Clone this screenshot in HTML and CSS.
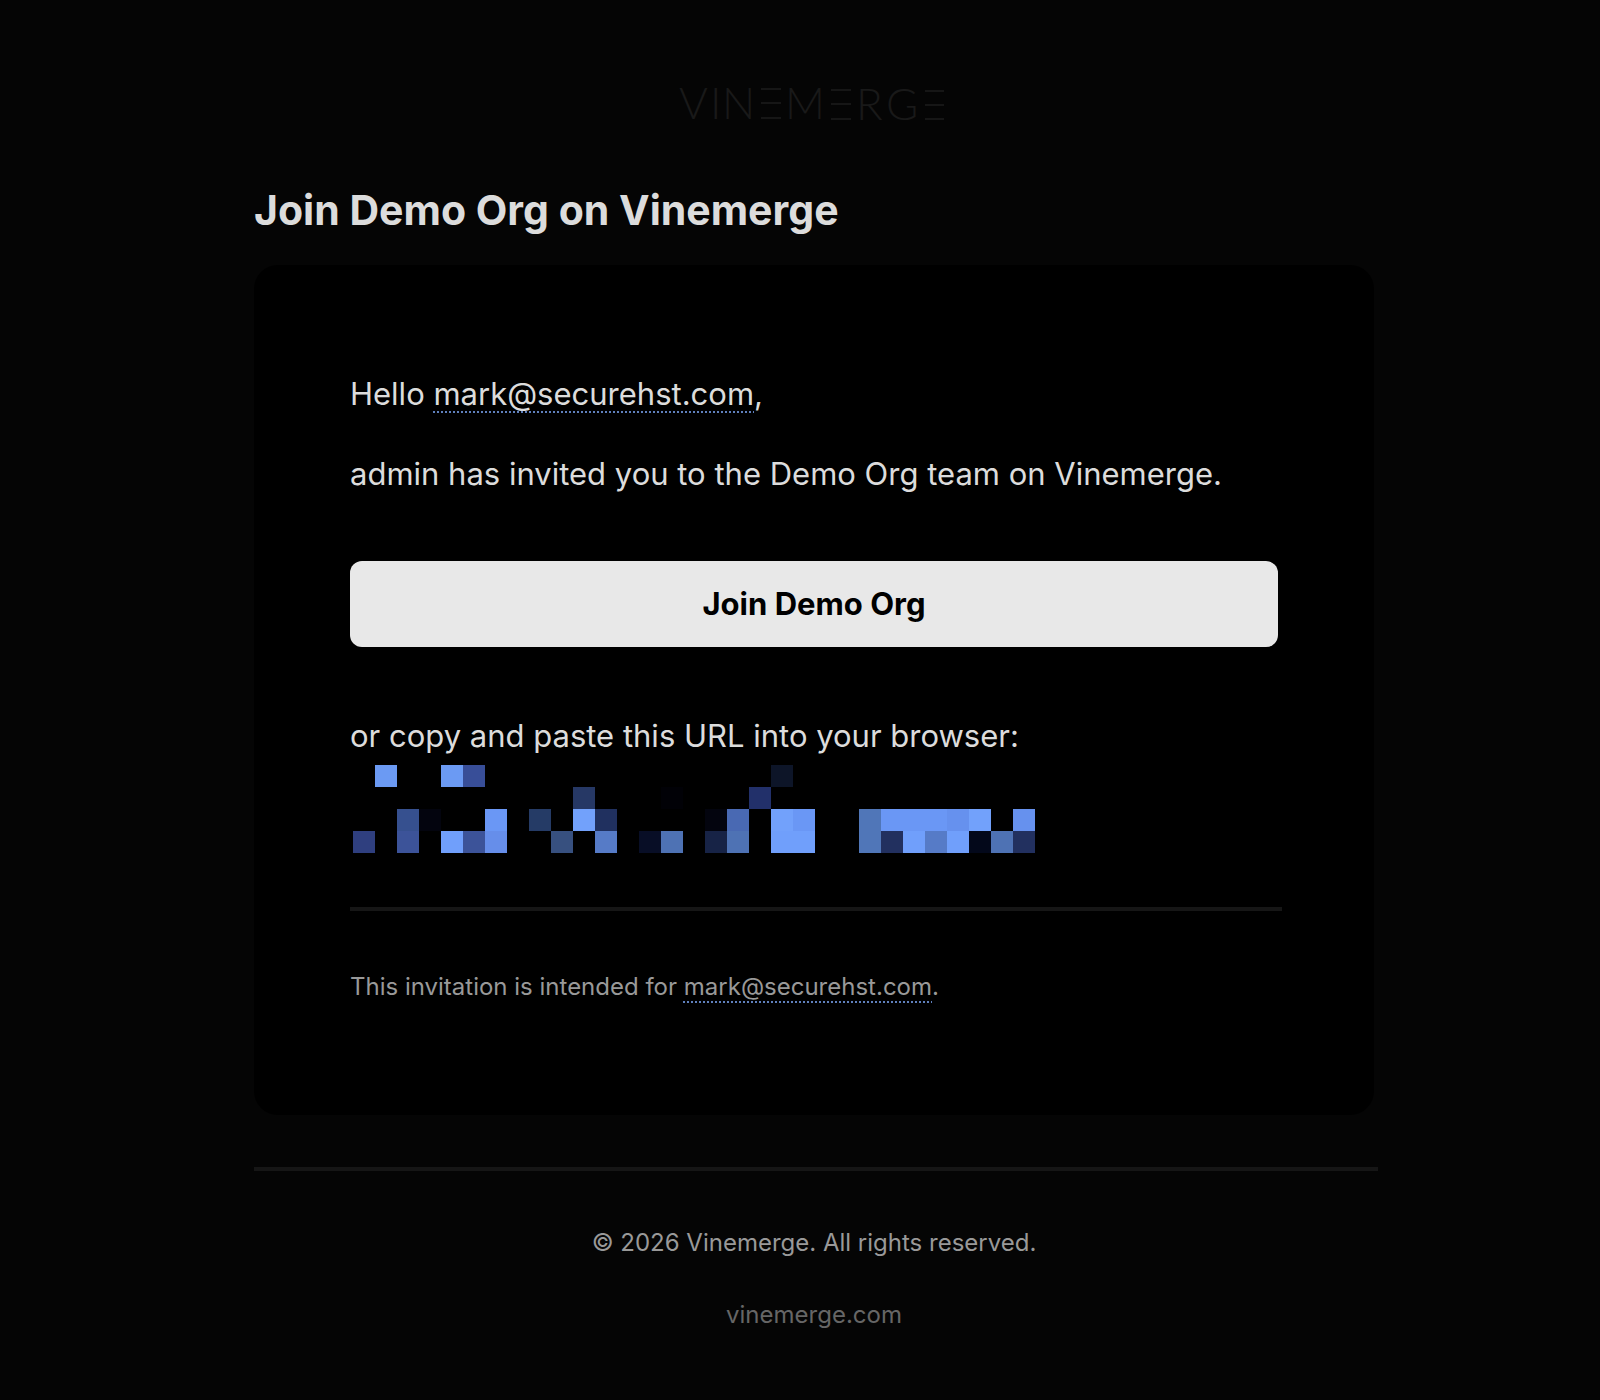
FILE: index.html
```html
<!DOCTYPE html>
<html lang="en">
<head>
  <meta charset="UTF-8" />
  <meta name="viewport" content="width=device-width, initial-scale=1.0" />
  <title>Join Demo Org on Vinemerge</title>
  <link rel="stylesheet" href="styles.css">
</head>
<body>

<div class="wrapper">
  <svg class="logo" width="290" height="74" viewBox="-10 -20 290 74" role="img" aria-label="Vinemerge">
    <g class="logo-text">
      <text x="0" y="33">V</text>
      <text x="31" y="33">I</text>
      <text x="43" y="33">N</text>
      <text x="106" y="33">M</text>
      <text x="177" y="34">R</text>
      <text x="207" y="34">G</text>
    </g>
    <path class="logo-bars" d="M82 3h20M82 17h20M82 32h20M152 4h20M152 18h20M152 33h20M246 5h19M246 19h19M246 33h19" />
  </svg>

  <h1>Join Demo Org on Vinemerge</h1>

  <main class="card">
    <p>Hello <a class="email" href="mailto:mark@securehst.com">mark@securehst.com</a>,</p>
    <p>admin has invited you to the Demo Org team on Vinemerge.</p>

    <button type="button" class="join-button">Join Demo Org</button>

    <p class="copy">or copy and paste this URL into your browser:</p>
    <!-- pixelated invite link, one unit per block -->
    <svg class="redacted" width="682" height="88" viewBox="0 0 31 4" shape-rendering="crispEdges" aria-hidden="true">
      <path fill="#6b9af3" d="M1 0h1v1h-1zM4 0h1v1h-1z" />
      <path fill="#384e98" d="M5 0h1v1h-1z" />
      <path fill="#0d1528" d="M19 0h1v1h-1z" />

      <path fill="#263865" d="M10 1h1v1h-1z" />
      <path fill="#010106" d="M14 1h1v1h-1z" />
      <path fill="#22306a" d="M18 1h1v1h-1z" />

      <path fill="#36508f" d="M2 2h1v1h-1z" />
      <path fill="#03040e" d="M3 2h1v1h-1zM16 2h1v1h-1z" />
      <path fill="#6a97f5" d="M6 2h1v1h-1zM20 2h1v1h-1zM24 2h3v1h-3z" />
      <path fill="#253b66" d="M8 2h1v1h-1z" />
      <path fill="#72a1fb" d="M10 2h1v1h-1zM19 2h1v1h-1zM28 2h1v1h-1z" />
      <path fill="#20305f" d="M11 2h1v1h-1z" />
      <path fill="#4969b3" d="M17 2h1v1h-1z" />
      <path fill="#5076b8" d="M23 2h1v2h-1z" />
      <path fill="#6691ee" d="M27 2h1v1h-1zM30 2h1v1h-1z" />

      <path fill="#2f3f7f" d="M0 3h1v1h-1z" />
      <path fill="#3c5399" d="M2 3h1v1h-1zM5 3h1v1h-1z" />
      <path fill="#709ffb" d="M4 3h1v1h-1zM19 3h2v1h-2zM25 3h1v1h-1zM27 3h1v1h-1z" />
      <path fill="#668eea" d="M6 3h1v1h-1z" />
      <path fill="#37507f" d="M9 3h1v1h-1z" />
      <path fill="#567bc7" d="M11 3h1v1h-1zM26 3h1v1h-1z" />
      <path fill="#080e26" d="M13 3h1v1h-1z" />
      <path fill="#4e72b4" d="M14 3h1v1h-1zM17 3h1v1h-1zM29 3h1v1h-1z" />
      <path fill="#172346" d="M16 3h1v1h-1z" />
      <path fill="#22305f" d="M24 3h1v1h-1zM30 3h1v1h-1z" />
      <path fill="#03081a" d="M28 3h1v1h-1z" />
    </svg>

    <hr>
    <p class="note">This invitation is intended for <a class="email" href="mailto:mark@securehst.com">mark@securehst.com</a>.</p>
  </main>

  <footer>
    <hr>
    <p>© 2026 Vinemerge. All rights reserved.</p>
    <p><a class="site" href="#">vinemerge.com</a></p>
  </footer>
</div>

</body>
</html>
```
FILE: styles.css
```css
body {
  margin: 0;
  padding: 66px 0 32px 28px;
  background: #050505;
  color: #dcdcdc;
  font-family: Inter, "Liberation Sans", sans-serif;
  font-size: 31px;
  line-height: 64px;
}

.wrapper {
  max-width: 1120px;
  margin: 0 auto;
}

.logo {
  display: block;
  margin: 0 auto 42px;
}

.logo-text {
  fill: #191919;
  font-family: Lato, sans-serif;
  font-size: 44px;
  font-weight: 300;
}

.logo-bars {
  stroke: #161616;
  stroke-width: 2;
}

h1 {
  margin: 0 0 27px;
  font-size: 41px;
  font-weight: 700;
  line-height: 56px;
}

.card {
  padding: 97px 96px 104px;
  background: #000;
  border-radius: 24px;
}

p {
  margin: 0 0 16px;
}

hr {
  box-sizing: content-box;
  width: 100%;
  height: 0;
  margin: 0;
  border: 2px solid #161616;
}

.email {
  color: inherit;
  text-decoration: underline dotted #5f80bd 2px;
  text-underline-offset: 6px;
  text-decoration-skip-ink: none;
}

.join-button {
  display: block;
  width: 100%;
  height: 86px;
  margin: 55px 0 60px;
  padding: 0 0 2px;
  border: none;
  border-radius: 12px;
  background: #e8e8e8;
  color: #000;
  font-family: inherit;
  font-size: 31px;
  font-weight: 700;
  cursor: pointer;
}

.copy {
  margin: 0;
  line-height: 58px;
}

.redacted {
  display: block;
  max-width: 100%;
  margin: 0 0 54px 3px;
}

.note {
  margin: 52px 0 0;
  color: #999;
  font-size: 24px;
  line-height: 48px;
}

footer {
  margin-top: 52px;
  color: #999;
  font-size: 24px;
  line-height: 48px;
  text-align: center;
}

footer hr {
  margin-bottom: 48px;
}

footer p {
  margin-bottom: 24px;
}

.site {
  color: #666;
  text-decoration: none;
}
```
